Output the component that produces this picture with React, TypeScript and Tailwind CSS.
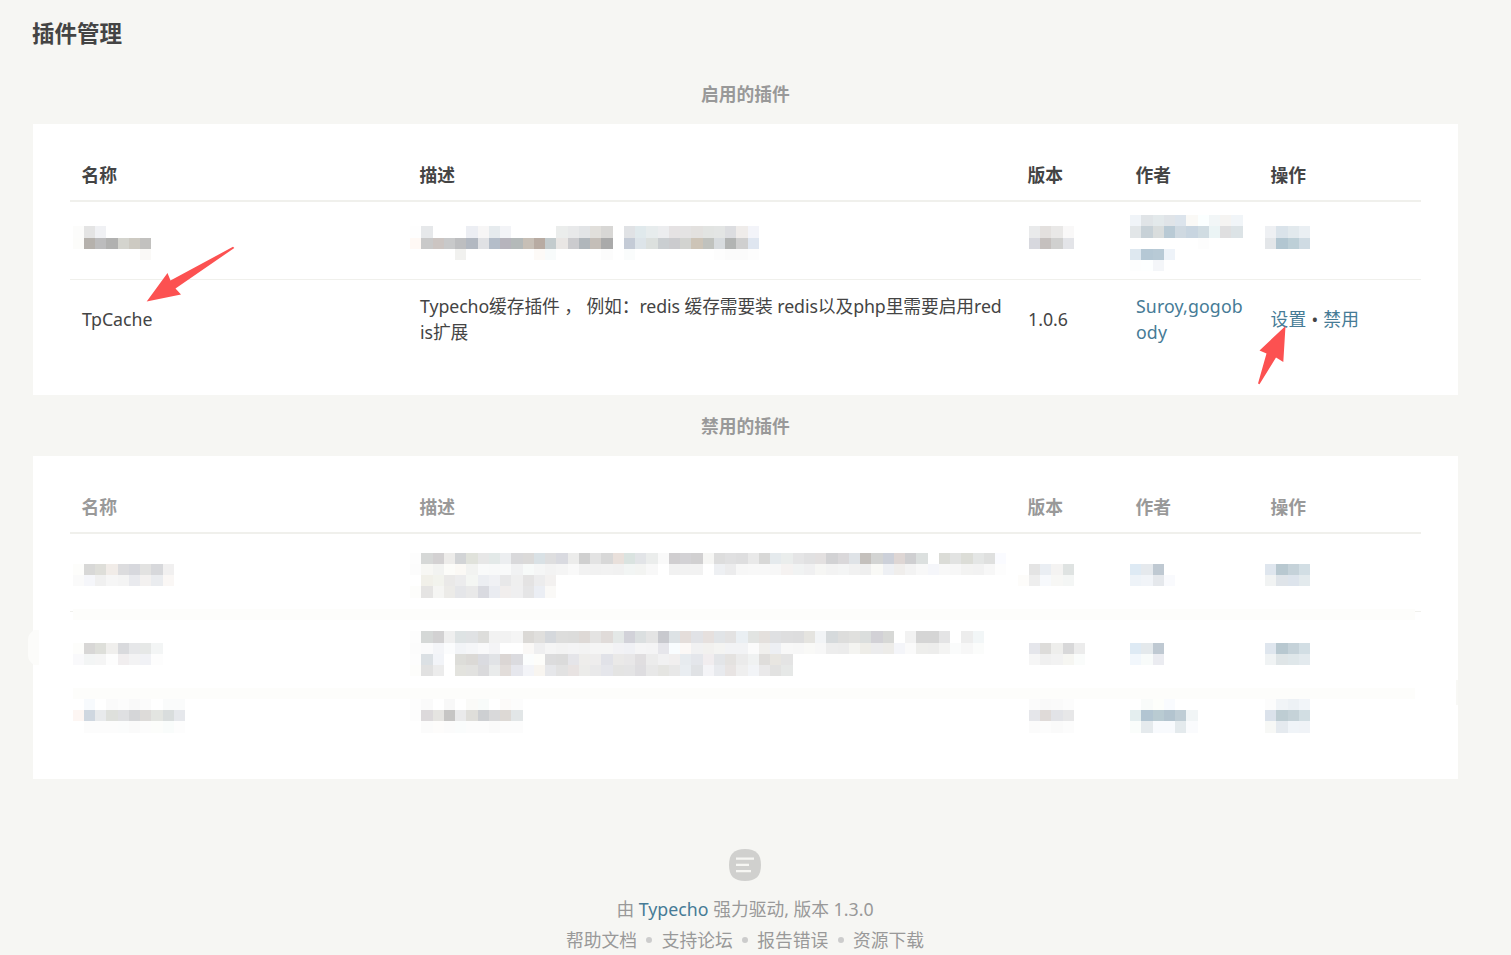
import type { ReactNode } from 'react';
import clsx from 'clsx';

interface MosaicProps {
  rows: string[];
  x: number;
  y: number;
  className?: string;
}

interface PluginRow {
  key: string;
  height: string;
  cells: ReactNode[];
}

const CELL = 11.25;

// rows: hex colours separated by spaces, "." is an empty cell; x / y: sub-pixel phase of the grid
function Mosaic({ rows, x, y, className }: MosaicProps) {
  const cells = rows.map((row) => row.split(' '));
  const cols = Math.max(...cells.map((row) => row.length));
  const width = Math.floor(x + cols * CELL);
  const height = Math.floor(y + rows.length * CELL);

  return (
    <svg width={width} height={height} className={clsx('block shrink-0', className)} shapeRendering="crispEdges">
      {cells.map((row, r) =>
        row.map((color, c) => {
          if (color === '.') return null;
          const left = Math.floor(x + c * CELL);
          const top = Math.floor(y + r * CELL);
          return (
            <rect
              key={`${r}-${c}`}
              x={left}
              y={top}
              width={Math.floor(x + (c + 1) * CELL) - left}
              height={Math.floor(y + (r + 1) * CELL) - top}
              fill={`#${color}`}
            />
          );
        })
      )}
    </svg>
  );
}

const GRID = 'grid grid-cols-[338px_608px_108px_135px_162px]';
const HEADERS = ['名称', '描述', '版本', '作者', '操作'];

function PluginTable({ rows, muted, banded }: { rows: PluginRow[]; muted?: boolean; banded?: boolean }) {
  return (
    <div className={clsx('mx-[37px]', muted ? 'text-[#999]' : 'text-[#444]')}>
      <div className={clsx(GRID, 'h-[42px] border-b-2 border-[#f0f0ec] pt-[2px] font-bold')}>
        {HEADERS.map((title) => (
          <div key={title} className="px-3 leading-[26px] -indent-[0.5px]">
            {title}
          </div>
        ))}
      </div>
      {rows.map((row, index) => (
        <div key={row.key}>
          <div className={clsx(GRID, row.height)}>
            {row.cells.map((cell, i) => (
              <div key={i} className="min-w-0">
                {cell}
              </div>
            ))}
          </div>
          {index < rows.length - 1 &&
            (banded ? (
              <div className="flex h-[11px] justify-between">
                <span className={clsx('mt-[2px] h-px w-[3px]', index === 0 && 'bg-[#f0f0ec]')} />
                <span className="flex-1 bg-[#fdfdfb]" />
                <span className={clsx('mt-[2px] h-px w-[6px]', index === 0 && 'bg-[#f0f0ec]')} />
              </div>
            ) : (
              <div className="h-px bg-[#f0f0ec]" />
            ))}
        </div>
      ))}
    </div>
  );
}

const enabledRows: PluginRow[] = [
  {
    key: 'hidden',
    height: 'h-[77px]',
    cells: [
      <Mosaic
        x={0.125}
        y={0.875}
        className="mt-[24px] ml-[3px]"
        rows={[
          'fcfcfb e4e4e4 f0f1f4',
          'fcfcfa b5b1ac bcbcbd b1b1b0 d4d4ce cdcac2 c2c1bf',
          '. . . . . . faf9f7',
        ]}
      />,
      <Mosaic
        x={0.625}
        y={0.875}
        className="mt-[24px] ml-[2px]"
        rows={[
          'fefefe e6e8ea . . . eceef3 f7f6f6 e6ebee f3f4f7 . . . . ebedec e8e9ea e2e4e6 e1dfdb d8d7d5 . e0e2e5 e0e9ec e7eced ecedef e5e2e3 e4e3e3 e3e1df e2e4e2 e3e5e4 dcdde0 efecea f3f4f9',
          'fff9f5 c9c9c9 ccc5c2 c8c9ca bdbec0 b2b8c1 e0e1e4 b4bdc9 b6b4bc b4b9b9 c7bfb6 b8aba2 c3cbcd e9e6e4 cbcbce b0b6bb c4beb8 aaaaaa . c4cbd6 dde4e9 dce0de caced1 cbcbce d2d3d0 cdc4b7 c0c2be d7dbde b2b4b3 cfcfcf dfe6f0',
          '. . . . f1f1ef . . . . . . fdfaf7 f8fbfb . . . . fcfcfc . fafcfc . . . . . . . fdfdfd fbfbfb fbfbfb fdfdfd',
        ]}
      />,
      <Mosaic
        x={0.125}
        y={0.875}
        className="mt-[24px] ml-[2px]"
        rows={['. e9eaeb e3e0de e9e8e7 f9f8f8', '. d7d8de c5c0be d0d0cf e3e4e8']}
      />,
      <Mosaic
        x={0.375}
        y={0.625}
        className="mt-[13px] -ml-[5px]"
        rows={[
          '. f0f4f8 e0e4e7 e3e9eb e0e4e8 dce4ec faf9f6 fbffff f2f6f7 f5f4f2 f1f5f8',
          '. e2e6e8 c7d1d7 d9dddd b9cad5 cfd9e1 c8d5e0 d0dce2 ebf4f5 dfdfe0 dce3e6',
          '. . . . . . . fdfdfd',
          '. dee8f0 b5c8d5 b8cad6 eef3f9',
          '. fdfefe fdffff f4f6f9',
        ]}
      />,
      <Mosaic
        x={0.375}
        y={0.875}
        className="mt-[24px] -ml-[5px]"
        rows={['. eef0f3 dae3ea e2e9ed eaeff3', '. e3e6e9 b2c6d1 bdcfd7 cfdbe3']}
      />,
    ],
  },
  {
    key: 'tpcache',
    height: 'h-[79px]',
    cells: [
      <div className="px-3 pt-[26px]">TpCache</div>,
      <div className="px-3 pt-[13px] tracking-[-0.09px] whitespace-nowrap">
        Typecho缓存插件 ， 例如：redis 缓存需要装 redis以及php里需要启用red
        <br />
        is扩展
      </div>,
      <div className="px-3 pt-[26px]">1.0.6</div>,
      <div className="px-3 pt-[13px] tracking-[0.13px] whitespace-nowrap">
        <a className="text-[#467b96]">
          Suroy,gogob
          <br />
          ody
        </a>
      </div>,
      <div className="px-3 pt-[26px] tracking-[0.25px] whitespace-nowrap -indent-[0.5px]">
        <a className="text-[#467b96]">设置</a> • <a className="text-[#467b96]">禁用</a>
      </div>,
    ],
  },
];

const disabledRows: PluginRow[] = [
  {
    key: 'first',
    height: 'h-[75px]',
    cells: [
      <Mosaic
        x={0.125}
        y={0.375}
        className="mt-[30px] ml-[3px]"
        rows={[
          'fdfdfb d8d8d7 deded9 f1ece8 dcdcde d7d8dd e2e2e1 d7d8db f1f0f0',
          'fafafa f5f6fa f0f0f0 f6f6f6 f4f4f4 e9eaee f3f1f0 eaecef faf7f5',
        ]}
      />,
      <Mosaic
        x={0.625}
        y={0.125}
        className="mt-[19px] ml-[2px]"
        rows={[
          'fdfdfd d6d8d7 d3d1d2 edecea d2d4d6 e0e2db e7e7e7 e3e9e8 eceef0 d9d9db dbdad9 d9e1e5 dededf d9dae0 ececeb d0d0d0 e3e3e3 d8d8d8 e9e0db dae3e0 e2e4e7 ebedec f9f9f9 d0ced0 d3d2d5 d1d0d1 f6f6f4 dddddd e0e0e1 dededf e9e9e9 d8d8d7 e5eaed eaedec e5e5e6 e1e1e2 e3e0e0 d2d2d4 dad8da dfe3e7 c4c0bc d3d4d3 ccd0d9 ded6d4 cfcfd1 dce0df . dbdcd7 e2e3e2 dcddd7 e4e6e5 dfe0df fafbff',
          'fcfcfc f7f7f4 f2f3f1 fcfcf9 fbf9f5 f2f3f1 f9fafa f8f9f9 f9fafa f1f2f3 f7faf9 f5f6f6 f3f3f3 f5f5f5 f9f9f9 f2f2f2 f1f1f1 f2f2f2 f1f1f1 f2f5f4 f3f4f2 f8f8f8 . f1f1f1 f2f2f2 f2f2f2 . eef0f3 ececed f7f7f7 f8f8f8 f8f8f8 f7f7f7 f5f2f1 f1f3f3 f0f0f1 f6f6f4 f3f3f3 f4f5f5 f1f1f1 efefef f9f9f6 eef0f4 f0eeec f3f3f3 f8f8f8 f5f6fa f8f8f8 f7f7f7 f3f3f2 f2f2f2 f7f7f7 fdfdfd',
          '. f1f0e9 f2f3ed eae9e8 ececed f4f6f3 eceef2 f0f1f4 e8e8e9 efefef e4e3e3 ececed f3f1f0',
          'fdfdfb e5e4e3 f5f5f3 ecebe8 e5e6e9 e9e9e9 d9dae0 eaecf1 f1eeed efeff0 e5e5e6 ebeef4 faf9f7',
        ]}
      />,
      <Mosaic
        x={0.125}
        y={0.375}
        className="mt-[30px] ml-[2px]"
        rows={['. e4e4e4 eaeef3 f4f3f2 dfe3e2', 'fdfcfa eeeeee f7f9fc f7f7f5 f4f6f5']}
      />,
      <Mosaic
        x={0.375}
        y={0.375}
        className="mt-[30px] -ml-[5px]"
        rows={['. deeaf4 e5e9ed bfc9d2', '. eef3f8 f1f4f8 e5e8ec f9fafd']}
      />,
      <Mosaic
        x={0.375}
        y={0.375}
        className="mt-[30px] -ml-[5px]"
        rows={['. dfe6ee b8c8d0 c5d2d9 d2dee4', '. f1f3f3 dfe4e9 dde4ec e3eaed']}
      />,
    ],
  },
  {
    key: 'second',
    height: 'h-[68px]',
    cells: [
      <Mosaic
        x={0.125}
        y={0.125}
        className="mt-[23px] ml-[3px]"
        rows={[
          'fdfdfb d8d7d6 dedfda f0efed d9dadd e6e7e9 e6e8e7 f3f5f5',
          'f9f9fb f3f5f5 f5f5f5 fdfdfd f1eeef f3f3f4 f1f2f6 fdfdfd',
        ]}
      />,
      <Mosaic
        x={0.625}
        y={0.875}
        className="mt-[11px] ml-[2px]"
        rows={[
          'fdfdfd d5d8d7 d2d1d2 efefef dee3e4 e0e2e4 dddddb f2f2f2 f2f2f2 f5f5f5 dbd9d6 e0dfdd d5d8dc dddddc dcdcdb ded9d6 e4e3e2 e0dbd9 e4e8e7 d2d2d9 dbdfe0 e4e4e4 c8c9ce dde2e5 e4ddda e1e2e6 e6e0de e1e4e7 e3e2e2 eaeff3 e2e4e2 e4e0dd dfe0e2 dededf ddddde e5e4e0 f2f4f6 d6dadc dddddc e0e0de dbdedd d2d1d6 d7d8d6 . f2f2f2 d5d5d5 d5d5d5 e4e4e5 . ededed f2f6f7',
          'fcfcfc fafafb f4f5f8 fbfcfd f2f4f7 f5f6f8 f9f9fa f4f4f6 . . faf8f6 efeff0 f5f5f5 f3f3f3 f4f4f5 f3f3f3 f5f5f5 f5f5f5 f2f2f5 f0f1f5 f5f5f6 f4f4f5 e6e6eb f9fdff fcf8f6 f1f1f2 f2f1ef f4f4f2 f2f3f5 f2f3f5 fbfbfb f0efed edeff3 f8f8f8 f7f7f7 f9f9f7 f7f7f7 ededed ececec f4f4f1 eeede8 ececed edece9 f4f5f9 fafafa eeeeec ededec f4f4f3 fafbfb f7f7f7 fbfcfb',
          'fdfdfd dbe0e4 f2f4f8 . ddddd9 dbd9d6 dadbe0 e1e3e6 dbd6d4 dbdbdf fbfdfd fdfdfa dcdcdd dbdbdb e5e5e9 eeedeb eeeded e1e2e8 eae9e8 e8e7e8 e0dee0 ececec f1f1f2 f1efef e7ebef e4e6eb f1edef e3e5e8 e4e2e0 ebebeb f0f2f2 dfdddb e8e6e1 e4e4e4',
          'fdfdfb e1e1e1 ececec . e3e3de e2e2e0 dadadc e9ebeb e2ddda e6e7ed f3f4f8 f8f5f0 e6e7ea e2e2e2 e8e3e2 ececea e9e9ea e5e6eb e4e4e3 e4e4e5 dedde0 e8e8e8 e5e5e2 e8e8e8 e9edf1 e0e2e5 f4f4f7 e8eaee e8e4e3 efefef f2f4f7 eae9ea e2e2e1 e6e8e7',
        ]}
      />,
      <Mosaic
        x={0.125}
        y={0.125}
        className="mt-[23px] ml-[2px]"
        rows={['. e5e6eb dddcda eeeeec d8d8d9 ececec', '. f6f6f6 f0f0f0 f2f2f2 f6f6f2 fafcfb']}
      />,
      <Mosaic
        x={0.375}
        y={0.125}
        className="mt-[23px] -ml-[5px]"
        rows={['. deeaf4 e4e9ec bfc9d2', '. f2f7fc f8fbfa ebecf1']}
      />,
      <Mosaic
        x={0.375}
        y={0.125}
        className="mt-[23px] -ml-[5px]"
        rows={['. dfe6ee b8c8d0 c5d2d9 d2dee4', '. f0f3f4 dfe5e7 dfe7ea e3eaee']}
      />,
    ],
  },
  {
    key: 'third',
    height: 'h-[43px]',
    cells: [
      <Mosaic
        x={0.125}
        y={0.375}
        className="ml-[3px]"
        rows={[
          '. f7fafd . fafafa fcfcfc f9f9f9 fbfbfb . fafbfb fafbfb',
          'fdf6f3 cfd7e0 e8eaec dee0dc dfe0e2 d5d6d8 dddbd9 e3e5e1 d9dddd e6e8ec',
          '. fcfcfc fcfcfc fcfcfc fbfcfc fafafa fcfcfc fcfdfb f9fcfb fdfdfd',
        ]}
      />,
      <Mosaic
        x={0.625}
        y={0.375}
        className="ml-[2px]"
        rows={[
          'fdfdfd fafafa . f8f8f8 . fafaf8 f8fbfa . fcfaf9 fcfcfc',
          'fdfdfd dcd9db e5e4e1 c6c5c4 eaeaeb dfdeda cdcfd2 d9d9da ddd9d5 e2e6e7',
          '. fbfbfb fdfcfb fbfbfb fafcfc fcfcfc fcfcfc fafafa fcfcfc fcfcfc',
        ]}
      />,
      <Mosaic
        x={0.125}
        y={0.375}
        className="ml-[2px]"
        rows={[
          '. fbfbfb f9f9f9 fafafa fcfcfc',
          '. e5e6ea dfdad8 e2e3e7 e7e7e8',
          '. fbfbfb fcfcfc fafafa fcfcfc',
        ]}
      />,
      <Mosaic
        x={0.375}
        y={0.375}
        className="-ml-[5px]"
        rows={[
          '. . f9fbfa fdfefb f9fbfe',
          '. e4eeef b2c5d2 b9cbd2 b3c4cf bfcdd5 f1f5f6',
          '. fafdfb e5eaed f8fafd f8fafd e4eaed fafbfd',
        ]}
      />,
      <Mosaic
        x={0.375}
        y={0.375}
        className="-ml-[5px]"
        rows={[
          '. fcfcfc f1f4f7 edf1f5 f2f5f9',
          '. dbe2eb becdd3 c5d2d8 d2dee3',
          '. f7f8f6 e5eaef f0f4f8 f0f3f7',
        ]}
      />,
    ],
  },
];

const footerLinks = ['帮助文档', '支持论坛', '报告错误', '资源下载'];

export default function App() {
  return (
    <div className="relative h-[955px] w-[1511px] overflow-hidden bg-[#f6f6f3] font-['Noto_Sans','Noto_Sans_CJK_SC',sans-serif] text-[17.75px] leading-[26px] text-[#444]">
      <main className="ml-[33px] w-[1425px]">
        <h2 className="-ml-px h-[81px] pt-[18px] text-[22.5px] leading-[32px] font-bold">插件管理</h2>

        <h4 className="h-[43px] text-center font-bold text-[#999]">启用的插件</h4>
        <section className="h-[271px] bg-white pt-[36px]">
          <PluginTable rows={enabledRows} />
        </section>

        <h4 className="h-[61px] pt-[18px] text-center font-bold text-[#999]">禁用的插件</h4>
        <section className="h-[323px] bg-white pt-[36px]">
          <PluginTable rows={disabledRows} muted banded />
        </section>

        <footer className="-ml-px flex flex-col items-center pt-[70px] text-[#999]">
          <svg width="32" height="32" viewBox="0 0 32 32">
            <path
              d="M16 0C27 0 32 5 32 16S27 32 16 32 0 27 0 16 5 0 16 0Z"
              fill="#d0d0ce"
            />
            <path d="M7 8.5h18v2.3H7zM7 14.7h13v2.3H7zM7 20.9h15v2.3H7z" fill="#f6f6f3" />
          </svg>
          <p className="mt-[15px]">
            由 <a className="text-[#467b96]">Typecho</a> 强力驱动, 版本 1.3.0
          </p>
          <nav className="mt-[5px] flex items-center">
            {footerLinks.map((link, i) => (
              <span key={link} className="flex items-center">
                {i > 0 && <span className="mx-[9.3px] size-[6px] rounded-full bg-[#ccc]" />}
                <a>{link}</a>
              </span>
            ))}
          </nav>
        </footer>
      </main>

      <svg className="pointer-events-none absolute inset-0" width="1511" height="955">
        <path d="M146.7 301.5 167.5 273 170.5 280.5 233 246.8 234.3 248 175.5 288.5 181 294.5Z" fill="#fc5151" />
        <path d="M1285.5 326 1259.5 350.5 1266.5 353.5 1258 383.5 1259.5 384.3 1276 357.5 1283.3 362Z" fill="#fc5151" />
        <path d="M34 630h5v35h-5q-6-4-6-10v-15q0-6 6-10Z" fill="#fcfcfa" />
        <path d="M1456 680h2v25h-2z" fill="#f8f8f5" />
      </svg>
    </div>
  );
}
